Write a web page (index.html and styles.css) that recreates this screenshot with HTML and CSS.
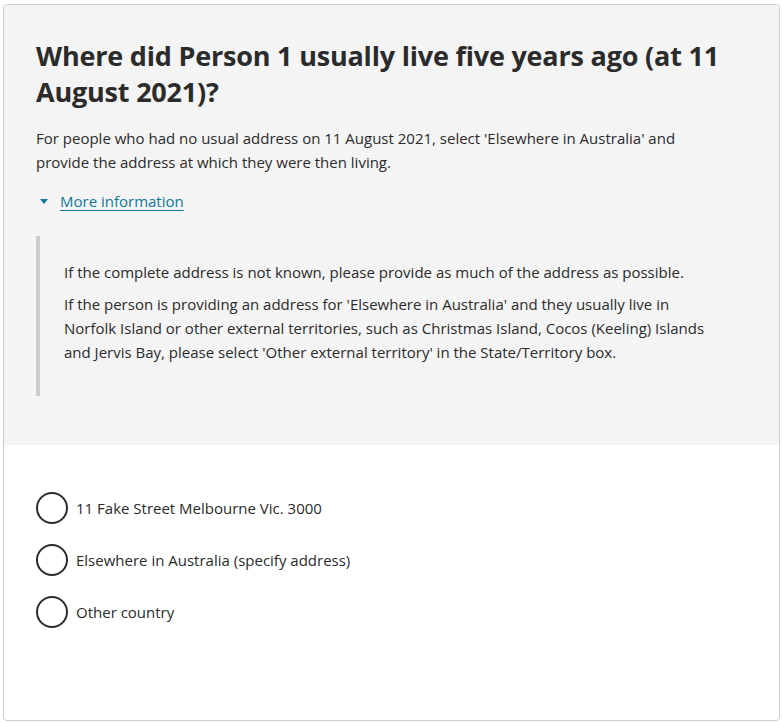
FILE: index.html
```html
<!DOCTYPE html>
<html lang="en">
<head>
    <meta charset="UTF-8">
    <meta name="viewport" content="width=device-width, initial-scale=1.0">
    <title>Usual address five years ago</title>
    <link rel="stylesheet" href="styles.css">
</head>
<body>
    <div class="question">
        <div class="question-head">
            <h1>Where did Person 1 usually live five years ago (at 11 August 2021)?</h1>
            <p class="hint">For people who had no usual address on 11 August 2021, select 'Elsewhere in Australia' and provide the address at which they were then living.</p>
            <details class="more-info" open>
                <summary><span class="caret"></span><span class="more-link">More information</span></summary>
                <div class="more-body">
                    <p>If the complete address is not known, please provide as much of the address as possible.</p>
                    <p>If the person is providing an address for 'Elsewhere in Australia' and they usually live in Norfolk Island or other external territories, such as Christmas Island, Cocos (Keeling) Islands and Jervis Bay, please select 'Other external territory' in the State/Territory box.</p>
                </div>
            </details>
        </div>
        <div class="question-body">
            <label class="radio"><input type="radio" name="addr"><span class="radio-mark"></span>11 Fake Street Melbourne Vic. 3000</label>
            <label class="radio"><input type="radio" name="addr"><span class="radio-mark"></span>Elsewhere in Australia (specify address)</label>
            <label class="radio"><input type="radio" name="addr"><span class="radio-mark"></span>Other country</label>
        </div>
    </div>
</body>
</html>
```

FILE: styles.css
```css
body {
    margin: 0;
    padding: 4px 2px 2px 3px;
    font-family: "Open Sans", "Noto Sans", Arial, sans-serif;
    color: #2b2b2b;
    background: #fff;
}
.question {
    border: 1px solid #cccccc;
    border-radius: 4px;
    overflow: hidden;
    height: 717px;
    box-sizing: border-box;
}
.question-head {
    background-color: #f4f4f4;
    padding: 33px 32px 49px 32px;
}
h1 {
    margin: 0 0 16px 0;
    font-size: 27px;
    letter-spacing: -0.2px;
    line-height: 36px;
    font-weight: 700;
    color: #2b2b2b;
}
.hint {
    margin: 0 0 15px 0;
    font-size: 15px;
    line-height: 24px;
    max-width: 690px;
}
.more-info summary {
    list-style: none;
    cursor: pointer;
    display: flex;
    align-items: center;
    height: 24px;
    font-size: 15px;
}
.more-info summary::-webkit-details-marker {
    display: none;
}
.caret {
    width: 0;
    height: 0;
    border-left: 4px solid transparent;
    border-right: 4px solid transparent;
    border-top: 5px solid #0f789b;
    margin: 1px 12px 0 4px;
}
.more-link {
    color: #0f789b;
    text-decoration: underline;
    text-underline-offset: 3px;
}
.more-body {
    margin-top: 23px;
    border-left: 4px solid #cccccc;
    padding: 24px 24px 24px 24px;
}
.more-body p {
    margin: 0 0 8px 0;
    font-size: 15px;
    line-height: 24px;
    max-width: 660px;
}
.question-body {
    padding: 47px 32px;
    display: flex;
    flex-direction: column;
    gap: 20px;
}
.radio {
    display: flex;
    align-items: center;
    font-size: 15px;
    height: 32px;
    cursor: pointer;
}
.radio input {
    position: absolute;
    opacity: 0;
}
.radio-mark {
    width: 32px;
    height: 32px;
    box-sizing: border-box;
    border: 2px solid #2b2b2b;
    border-radius: 50%;
    margin-right: 8px;
}
```
